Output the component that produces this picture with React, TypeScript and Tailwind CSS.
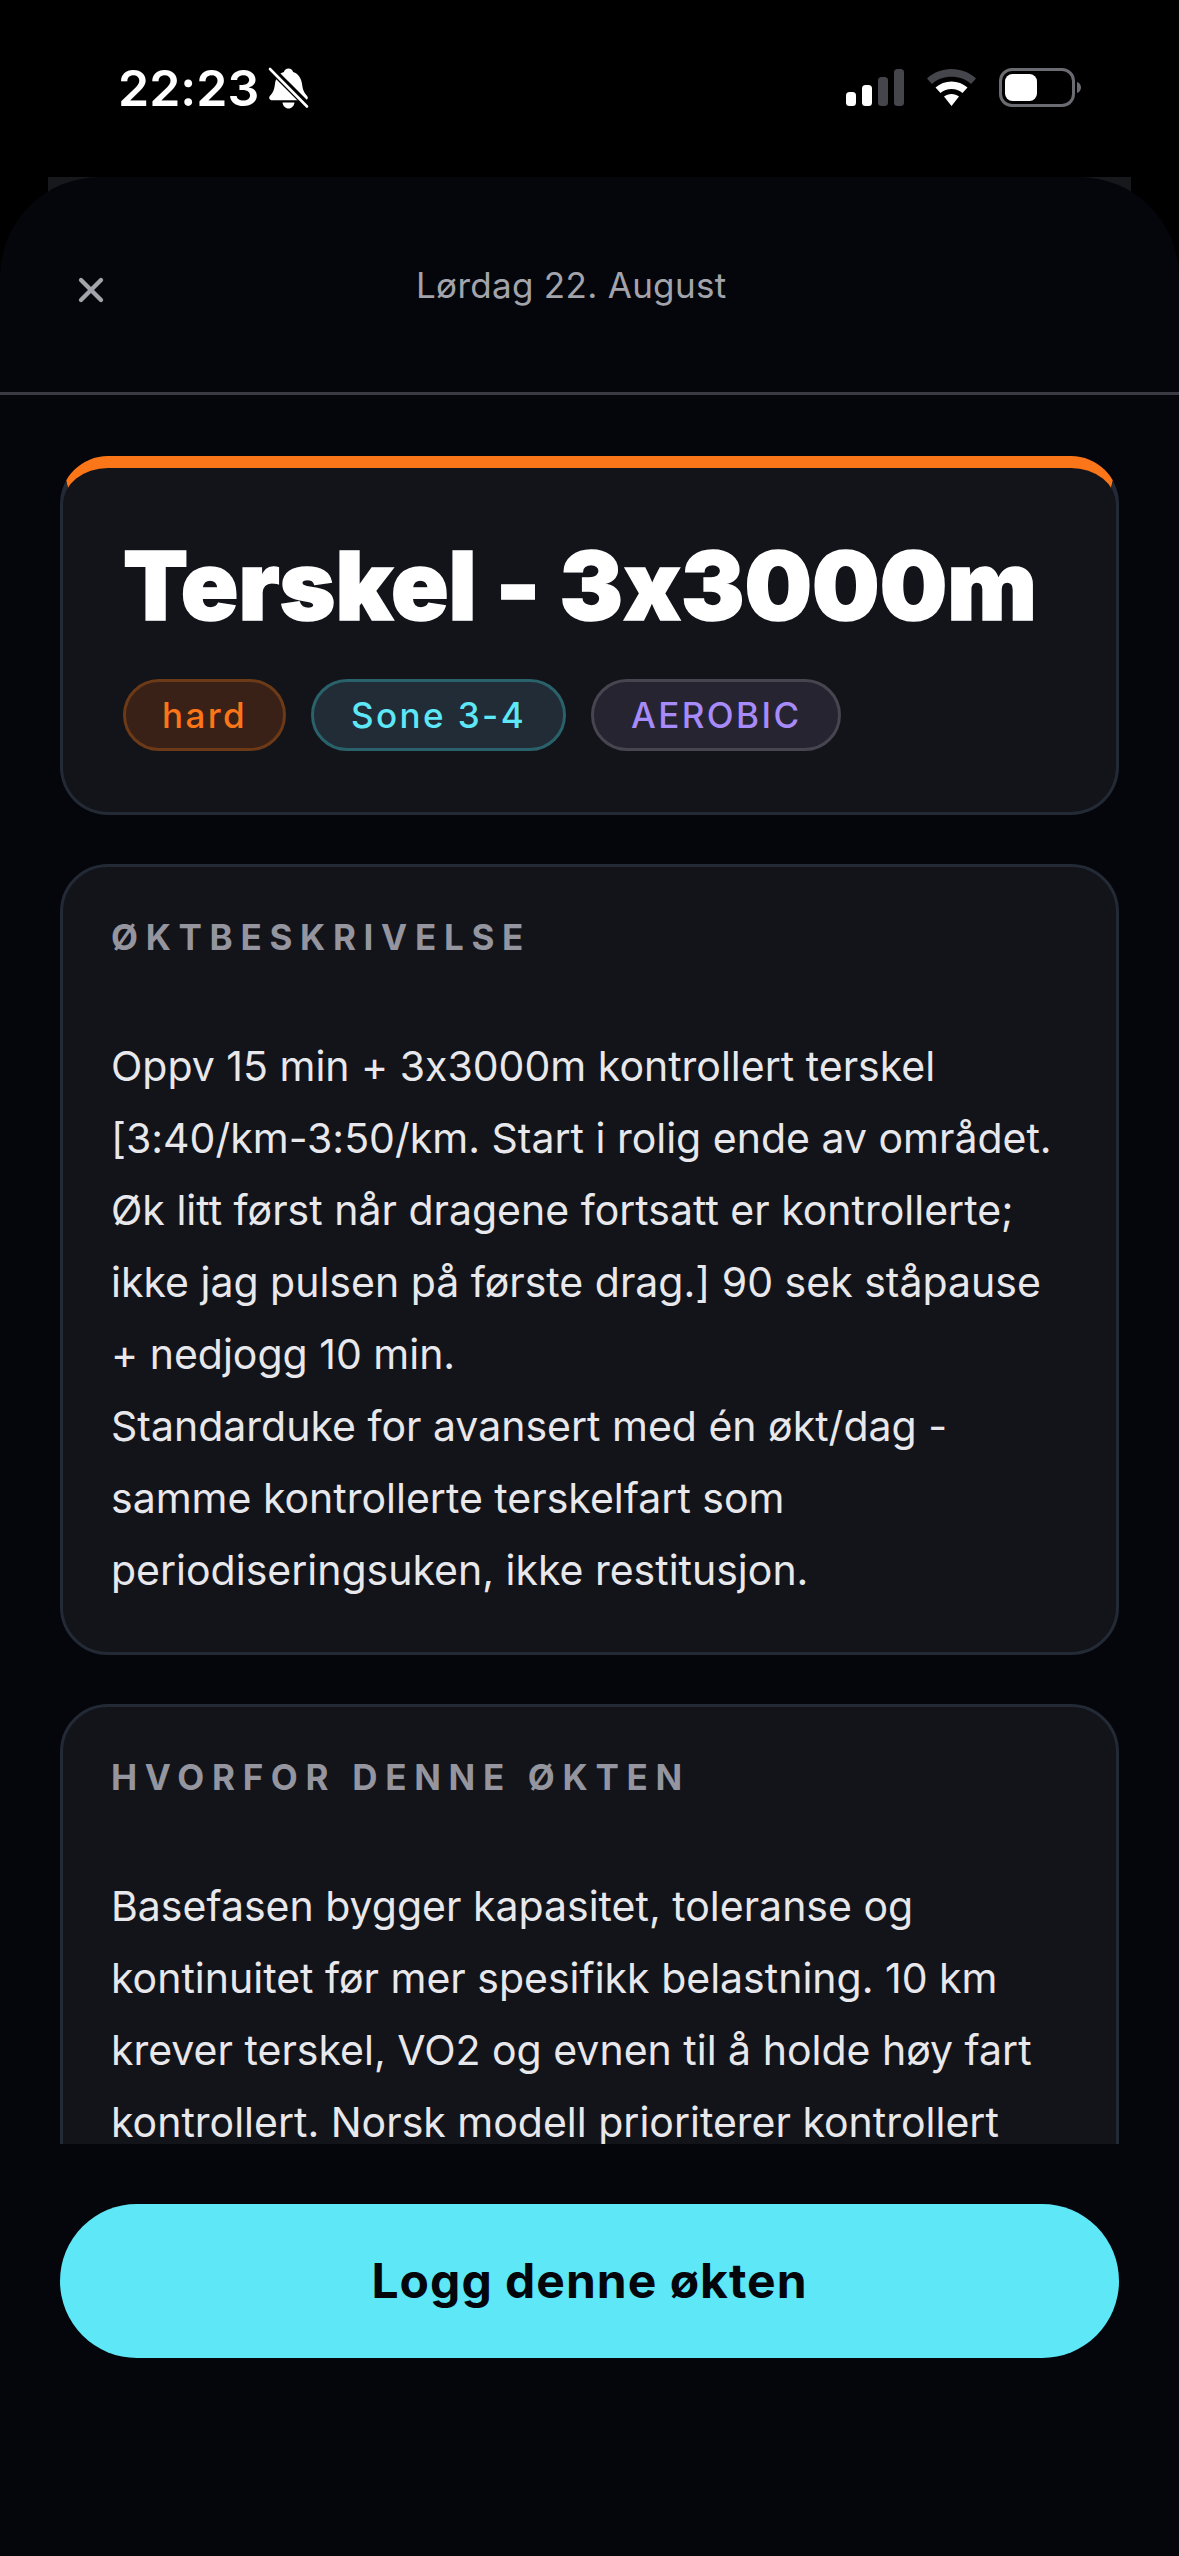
import { X } from "lucide-react";

const font = "font-['Inter',sans-serif] [font-feature-settings:'calt'_0]";

function SilentBell() {
  return (
    <svg width="41" height="43" viewBox="0 0 41 43" fill="none">
      <path
        d="M20.5 1.5c2.4 0 4 1.5 4.600 3.400 5.600 1.800 8.300 6.500 9 12.500.6 5 1.800 8.200 4.600 11 1 1.100 1.300 2 1 3-.4 1.200-1.500 1.800-3 1.800H4.300c-1.500 0-2.600-.6-3-1.800-.3-1 0-1.900 1-3 2.800-2.800 4-6 4.600-11 .7-6 3.400-10.700 9-12.500.6-1.900 2.200-3.400 4.600-3.400Z"
        fill="#fff"
      />
      <path d="M14.500 35.500h12c-.5 3.600-2.900 6-6 6s-5.500-2.400-6-6Z" fill="#fff" />
      <path d="M0 -1 41 40" stroke="#000" strokeWidth="7" />
      <path d="M2 2 39 39.500" stroke="#fff" strokeWidth="2.600" strokeLinecap="round" />
    </svg>
  );
}

function SignalBars() {
  return (
    <svg width="58" height="37" viewBox="0 0 58 37">
      <rect x="0" y="23" width="10" height="14" rx="3.500" fill="#fff" />
      <rect x="16" y="16" width="10" height="21" rx="3.500" fill="#fff" />
      <rect x="32" y="8" width="10" height="29" rx="3.500" fill="#45454c" />
      <rect x="48" y="0" width="10" height="37" rx="3.500" fill="#45454c" />
    </svg>
  );
}

function Wifi() {
  return (
    <svg width="49" height="37" viewBox="0 0 49 37">
      <path d="M0 9.500C6.500 3.500 15 0 24.500 0S42.500 3.500 49 9.500l-5 5.500C38.800 10.300 32 7.800 24.500 7.800S10.200 10.300 5 15Z" fill="#45454c" />
      <path d="M8.500 18.500C13 14.600 18.500 12.500 24.500 12.500s11.500 2.100 16 6l-5 5.500c-3.100-2.600-6.900-4.100-11-4.100s-7.900 1.500-11 4.100Z" fill="#fff" />
      <path d="M17 27.500c2.100-1.600 4.700-2.500 7.500-2.500s5.400.9 7.500 2.500L24.500 37Z" fill="#fff" />
    </svg>
  );
}

function Battery() {
  return (
    <svg width="82" height="39" viewBox="0 0 82 39">
      <rect x="1.500" y="1.500" width="73" height="36" rx="11.500" fill="none" stroke="#6b6b72" strokeWidth="3" />
      <rect x="6" y="6" width="32" height="27" rx="7.500" fill="#fff" />
      <path d="M78 14c2.500.8 4 3 4 5.500S80.500 24.200 78 25Z" fill="#6b6b72" />
    </svg>
  );
}

function StatusBar() {
  return (
    <div className="flex h-[177px] items-start justify-between bg-black pl-[118px] pr-[98px] pt-[67px]">
      <div className="flex items-center gap-[9px]">
        <span className="text-[50px] font-semibold leading-[41px] text-white">22:23</span>
        <SilentBell />
      </div>
      <div className="flex items-center gap-[23px] pt-[1px]">
        <SignalBars />
        <Wifi />
        <Battery />
      </div>
    </div>
  );
}

function Pill({ className, children }: { className: string; children: string }) {
  return (
    <span
      className={`flex h-[72px] items-center rounded-full border-[3px] text-[35px] font-medium tracking-[2.4px] ${className}`}
    >
      {children}
    </span>
  );
}

function Section({ title, children }: { title: string; children: React.ReactNode }) {
  return (
    <section className="rounded-[48px] border-[3px] border-[#232a36] bg-[#12141a] px-[48px] pb-[46px] pt-[49px]">
      <h3 className="text-[35px] font-bold leading-[42px] tracking-[7.7px] text-[#94959f]">{title}</h3>
      <p className="mt-[72px] text-[41px] leading-[72px] text-[#e8e8ec]">{children}</p>
    </section>
  );
}

export default function App() {
  return (
    <div className={`flex h-[2556px] flex-col overflow-hidden bg-black ${font}`}>
      <StatusBar />
      <div className="relative flex-1">
        {/* the sheet underneath peeks out at the corners */}
        <div className="absolute left-[48px] right-[48px] top-0 h-[40px] bg-[#17181c]" />
        <div className="relative flex h-full flex-col rounded-t-[100px] bg-[#05060b]">
          <header className="flex h-[218px] items-start border-b-[3px] border-[#3a3b42] pl-[71px] pt-[87px]">
            <X size={40} strokeWidth={2.6} className="mt-[6px] text-[#a3a4ab]" />
            <span className="ml-[305px] text-[35px] leading-[42px] tracking-[0.3px] text-[#a3a4ab]">
              Lørdag 22. August
            </span>
          </header>

          <main className="flex h-[1749px] flex-col gap-[49px] overflow-hidden px-[60px] pt-[61px]">
            <section className="rounded-[48px] border-[3px] border-t-[12px] border-[#232a36] border-t-[#fb7618] bg-[#12141a] px-[60px] pb-[61px] pt-[62px]">
              <h1 className="text-[95px] font-black leading-[112px] text-white [-webkit-text-stroke:1.5px_white]">
                Terskel - 3x3000m
              </h1>
              <div className="mt-[37px] flex gap-[25px]">
                <Pill className="border-[#6c3a16] bg-[#3a2118] px-[36px] text-[#fb7618]">hard</Pill>
                <Pill className="border-[#2a626b] bg-[#212c36] px-[37px] text-[#5ee7f7]">Sone 3-4</Pill>
                <Pill className="border-[#47454f] bg-[#272431] px-[37px] text-[#a78bfa]">AEROBIC</Pill>
              </div>
            </section>

            <Section title="ØKTBESKRIVELSE">
              Oppv 15 min + 3x3000m kontrollert terskel
              <br />
              [3:40/km-3:50/km. Start i rolig ende av området.
              <br />
              Øk litt først når dragene fortsatt er kontrollerte;
              <br />
              ikke jag pulsen på første drag.] 90 sek ståpause
              <br />+ nedjogg 10 min.
              <br />
              Standarduke for avansert med én økt/dag -
              <br />
              samme kontrollerte terskelfart som
              <br />
              periodiseringsuken, ikke restitusjon.
            </Section>

            <Section title="HVORFOR DENNE ØKTEN">
              Basefasen bygger kapasitet, toleranse og
              <br />
              kontinuitet før mer spesifikk belastning. 10 km
              <br />
              krever terskel, VO2 og evnen til å holde høy fart
              <br />
              kontrollert. Norsk modell prioriterer kontrollert
            </Section>
          </main>

          <div className="px-[60px] pt-[60px]">
            <button className="flex h-[154px] w-full items-center justify-center rounded-full bg-[#5ee7f7] text-[48px] font-bold tracking-[1px] text-[#05060b]">
              Logg denne økten
            </button>
          </div>
        </div>
      </div>
    </div>
  );
}
